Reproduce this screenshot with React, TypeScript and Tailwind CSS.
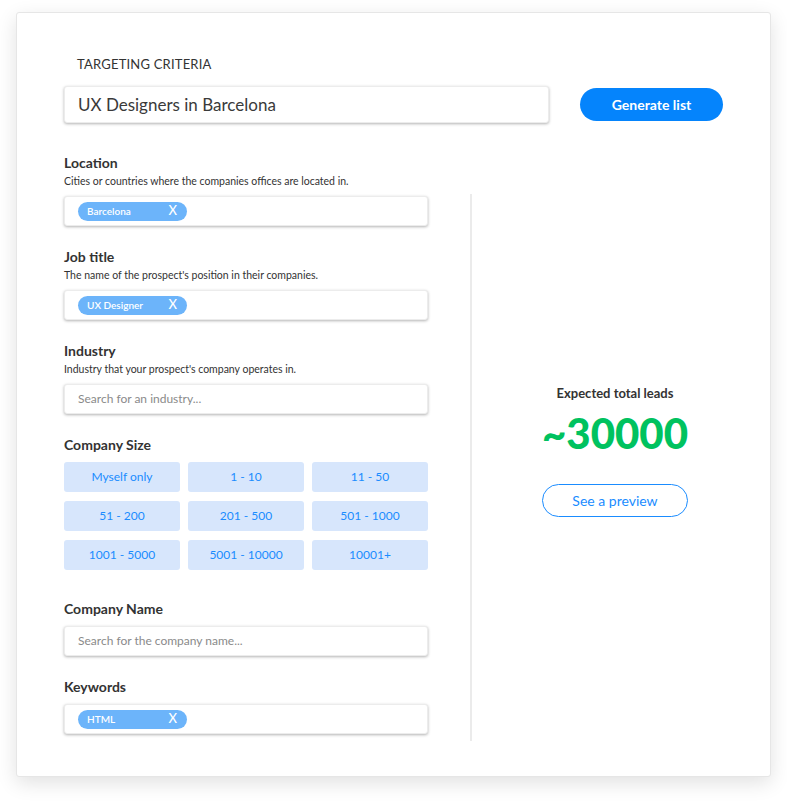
import React from 'react';

const sizes = [
  'Myself only',
  '1 - 10',
  '11 - 50',
  '51 - 200',
  '201 - 500',
  '501 - 1000',
  '1001 - 5000',
  '5001 - 10000',
  '10001+',
];

function Chip({ label }: { label: string }) {
  return (
    <span className="ml-[13px] flex h-[19px] w-[109px] items-center justify-between rounded-full bg-[#6cb4fa] pl-[9px] pr-[10px] text-white">
      <span className="text-[10px] font-semibold">{label}</span>
      <span className="text-[13px] font-medium">X</span>
    </span>
  );
}

function Field({
  label,
  hint,
  mt = 'mt-[22px]',
  children,
}: {
  label: string;
  hint?: string;
  mt?: string;
  children: React.ReactNode;
}) {
  return (
    <div className={mt}>
      <div className="text-[14px] font-bold leading-[18px] text-[#333]">{label}</div>
      {hint && <div className="mt-[2px] text-[10.5px] leading-[14px] text-[#333]">{hint}</div>}
      <div className="mt-[8px] flex h-[30px] w-[364px] items-center rounded-[3px] border border-[#ececec] bg-white shadow-[0_1px_3px_rgba(0,0,0,0.3)]">
        {children}
      </div>
    </div>
  );
}

function Placeholder({ text }: { text: string }) {
  return <span className="ml-[13px] text-[12px] text-[#8a8a8a]">{text}</span>;
}

export default function App() {
  return (
    <div className="min-h-screen bg-white pl-[16px] pt-[12px] font-['Lato',sans-serif]">
      <div className="h-[765px] w-[755px] rounded-[3px] border border-[#e6e6e6] bg-white pl-[47px] pt-[43px] shadow-[0_6px_20px_rgba(0,0,0,0.12)]">
        {/* Header */}
        <div className="ml-[13px] text-[13px] leading-[16px] tracking-[0.2px] text-[#333]">TARGETING CRITERIA</div>
        <div className="mt-[14px] flex items-center">
          <div className="flex h-[37px] w-[485px] items-center rounded-[3px] border border-[#ececec] bg-white pl-[13px] text-[17px] text-[#3a3a3a] shadow-[0_1px_3px_rgba(0,0,0,0.3)]">
            UX Designers in Barcelona
          </div>
          <button className="ml-[31px] h-[33px] w-[143px] rounded-full bg-[#0584fc] text-[14px] font-bold text-white">
            Generate list
          </button>
        </div>

        <div className="flex">
          {/* Filters */}
          <div className="w-[364px] pt-[9px]">
            <Field label="Location" hint="Cities or countries where the companies offices are located in.">
              <Chip label="Barcelona" />
            </Field>
            <Field label="Job title" hint="The name of the prospect's position in their companies.">
              <Chip label="UX Designer" />
            </Field>
            <Field label="Industry" hint="Industry that your prospect's company operates in.">
              <Placeholder text="Search for an industry..." />
            </Field>

            <div className="mt-[22px]">
              <div className="text-[14px] font-bold leading-[18px] text-[#333]">Company Size</div>
              <div className="mt-[8px] grid grid-cols-3 gap-x-[8px] gap-y-[9px]">
                {sizes.map((s) => (
                  <div
                    key={s}
                    className="flex h-[30px] items-center justify-center rounded-[3px] bg-[#d7e6fc] text-[12px] text-[#1a8cff]"
                  >
                    {s}
                  </div>
                ))}
              </div>
            </div>

            <Field label="Company Name" mt="mt-[30px]">
              <Placeholder text="Search for the company name..." />
            </Field>
            <Field label="Keywords">
              <Chip label="HTML" />
            </Field>
          </div>

          {/* Divider + result */}
          <div className="ml-[42px] mt-[71px] h-[547px] w-[2px] bg-[#ebebeb]" />
          <div className="flex w-[286px] flex-col items-center pt-[261px]">
            <div className="text-[13px] font-bold leading-[18px] text-[#333]">Expected total leads</div>
            <div className="mt-[7px] text-[42px] font-black leading-[48px] text-[#00c25f]">~30000</div>
            <button className="mt-[27px] h-[33px] w-[146px] rounded-full border border-[#1a8cff] text-[14px] text-[#1a8cff]">
              See a preview
            </button>
          </div>
        </div>
      </div>
    </div>
  );
}
